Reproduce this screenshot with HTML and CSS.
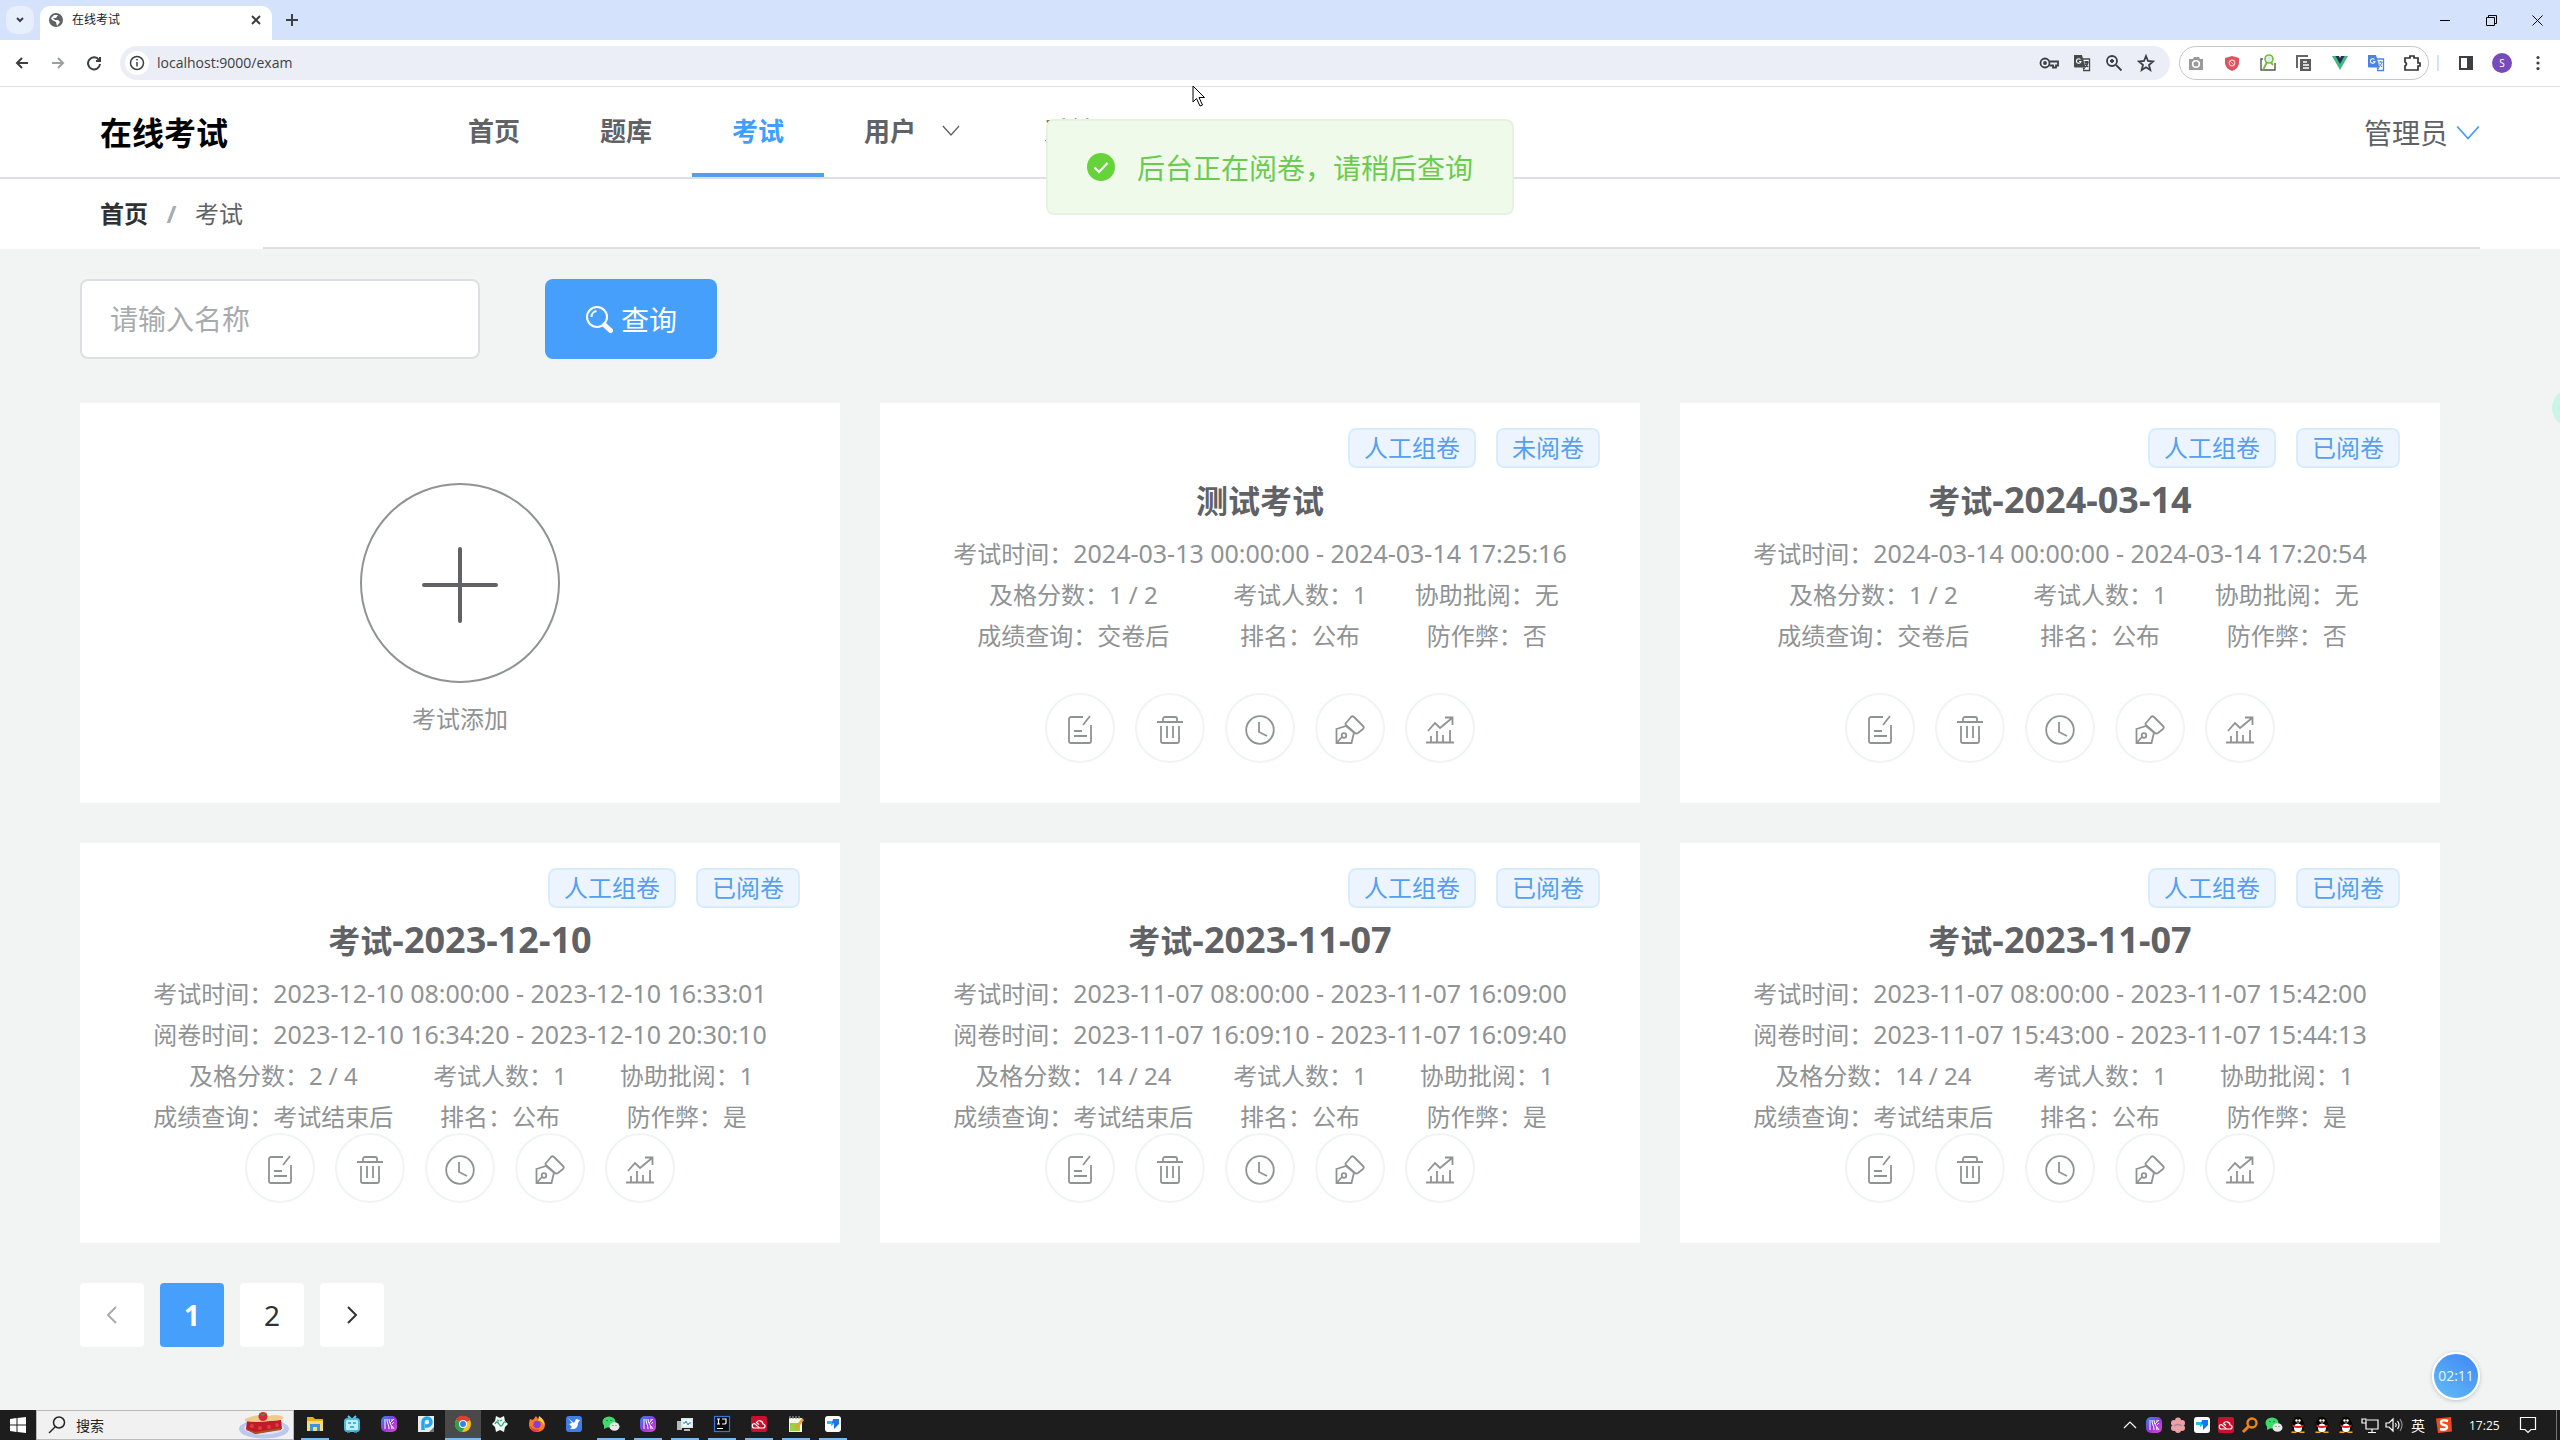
FILE: index.html
```html
<!DOCTYPE html>
<html lang="zh-CN">
<head>
<meta charset="utf-8">
<title>在线考试</title>
<link rel="stylesheet" href="styles.css">
</head>
<body>
<svg class="sprite" aria-hidden="true">
  <symbol id="edit" viewBox="0 0 30 30"><path d="M18 2H6a2 2 0 0 0-2 2v22a2 2 0 0 0 2 2h18a2 2 0 0 0 2-2V10M25 1l-7 9M9 16h8M9 21h13"/></symbol>
  <symbol id="trash" viewBox="0 0 30 30"><path d="M2 7h26M8 7V4a2 2 0 0 1 2-2h10a2 2 0 0 1 2 2v3M6 11v15a2 2 0 0 0 2 2h14a2 2 0 0 0 2-2V11M12 11v12M18 11v12"/></symbol>
  <symbol id="clock" viewBox="0 0 30 30"><circle cx="15" cy="15" r="13.8"/><path d="M14 7v10l8 4"/></symbol>
  <symbol id="pen" viewBox="0 0 30 30"><path d="M1.500 14l9.500-3 8 6.500-2.500 10.500h-15zM1.500 28l6-6.500M11 8l5-6q1.500-1.500 3 0l9 9q1.500 1.500 0 3l-5 4q-1.500 1-3 0l-8.500-7.500q-1.500-1-.500-2.500z"/><circle cx="9" cy="20.500" r="2.300"/></symbol>
  <symbol id="chart" viewBox="0 0 30 30"><path d="M1 27.500h28M6 27v-6M12 27V16M18 27v-7M25 27V15M3 16l7-8 5 5L27 3M20 2.500h7.500V10"/></symbol>
  <symbol id="down" viewBox="0 0 20 14"><path d="M1 2l9 10 9-10"/></symbol>
  <symbol id="wechat" viewBox="0 0 18 18"><ellipse cx="7" cy="7" rx="6.500" ry="5.500" fill="#3ddc6a"/><path d="M2 10l0 4 4-2z" fill="#3ddc6a"/><ellipse cx="12.500" cy="11.500" rx="5" ry="4.300" fill="#e8e8e8"/><g fill="#257a3d"><circle cx="5" cy="5.500" r=".8"/><circle cx="9" cy="5.500" r=".8"/><circle cx="11" cy="10.500" r=".6"/><circle cx="14" cy="10.500" r=".6"/></g></symbol>
  <linearGradient id="violet" x1="0" x2="1" y2="1"><stop stop-color="#2b8cf5"/><stop offset=".5" stop-color="#9436dc"/><stop offset="1" stop-color="#e24bd0"/></linearGradient>
  <symbol id="wave" viewBox="0 0 18 18"><rect x="1" y="1" width="16" height="16" rx="5" fill="url(#violet)"/><path d="M5 4v10M7 4c0 5 2 5 2 10M9 4c0 5 3 5 3 10M10 8l4-4M12 9l2-2M11 5l2 0M12 11l2 3" fill="none" stroke="#fff" stroke-width="1"/></symbol>
  <symbol id="cloud" viewBox="0 0 18 18"><rect x="1" y="1" width="16" height="16" rx="2" fill="#c9102d"/><path d="M4.500 13a2.200 2.200 0 0 1 0-4.500l5 4.500H13a2 2 0 0 0 0-4 3.500 3.500 0 0 0-6.500-1.500L9 9.500M4.500 13H10" fill="none" stroke="#fff" stroke-width="1.200"/></symbol>
  <symbol id="todesk" viewBox="0 0 18 18"><rect x="1" y="1" width="16" height="16" rx="3" fill="#fff"/><path d="M3 6h7v3L7 11V9H3z" fill="#16c5e8"/><path d="M9 4h6v5l-5 5V8H8z" fill="#1d73f5"/></symbol>
  <symbol id="qq" viewBox="0 0 18 18"><ellipse cx="9" cy="9.500" rx="6.500" ry="7" fill="#050505"/><circle cx="9" cy="5.500" r="4.800" fill="#050505"/><ellipse cx="9" cy="12" rx="4" ry="4.200" fill="#fff"/><circle cx="7.500" cy="4.500" r="1.200" fill="#fff"/><circle cx="10.500" cy="4.500" r="1.200" fill="#fff"/><path d="M3.500 8.500q5.500 3 11 0v2q-5.500 3-11 0z" fill="#e01f2d"/><path d="M2.500 15.500h5V17h-5zM10.500 15.500h5V17h-5zM7 6.500h4L9 7.700z" fill="#f5a81c"/></symbol>
  <symbol id="translate" viewBox="0 0 18 18"><path d="M7 5h9.500v11.500H10" fill="#fff" stroke="currentColor" stroke-width="1.300"/><path d="M1 1h8l3.500 12.500H2a1 1 0 0 1-1-1z" fill="currentColor"/><path d="M9.500 13.500h3l-2 3z" fill="currentColor"/><path d="M11.500 8h4M13.500 7v1M15 8q-1 3.500-3 5M12 9.500l3 3.500" fill="none" stroke="currentColor"/><path d="M7.500 5.500A2.300 2.300 0 1 0 8 7.500H6" fill="none" stroke="#fff" stroke-width="1.100"/></symbol>
</svg>

<header class="browser">
  <div class="tabstrip">
    <button class="tabsearch" aria-label="搜索标签页"><svg width="8" height="6" viewBox="0 0 8 6"><path d="M1 1l3 3 3-3"/></svg></button>
    <div class="tab">
      <svg width="16" height="16" viewBox="0 0 16 16"><circle cx="8" cy="8" r="7" fill="#5f6368"/><path d="M3 6l3-3h4L8 6H5l2 2h3l2 2-3 4-1-4-4-2z" fill="#fff"/></svg>
      <span class="tabname">在线考试</span>
      <button aria-label="关闭标签页"><svg width="10" height="10" viewBox="0 0 10 10"><path d="M1 1l8 8M9 1L1 9"/></svg></button>
    </div>
    <button class="newtab" aria-label="新标签页"><svg width="12" height="12" viewBox="0 0 12 12"><path d="M6 0v12M0 6h12"/></svg></button>
    <div class="winbtns">
      <button aria-label="最小化"><svg width="11" height="11" viewBox="0 0 11 11"><path d="M0 5.500h10"/></svg></button>
      <button aria-label="还原"><svg width="11" height="11" viewBox="0 0 11 11"><path d="M.5 2.500h8v8h-8zM2.500 2V.5h8v8H9"/></svg></button>
      <button aria-label="关闭"><svg width="11" height="11" viewBox="0 0 11 11"><path d="M.5.5l10 10M10.500.5l-10 10"/></svg></button>
    </div>
  </div>
  <div class="toolbar">
    <div class="navbtns">
      <button aria-label="后退"><svg width="16" height="16" viewBox="0 0 16 16"><path d="M14 8H3M8 3L3 8l5 5"/></svg></button>
      <button aria-label="前进" disabled><svg width="16" height="16" viewBox="0 0 16 16"><path d="M2 8h11M8 3l5 5-5 5"/></svg></button>
      <button aria-label="刷新"><svg width="16" height="16" viewBox="0 0 16 16"><path d="M13 5a6 6 0 1 0 1 4M14 2v4h-4"/></svg></button>
    </div>
    <div class="omnibox">
      <span class="siteinfo"><svg width="16" height="16" viewBox="0 0 16 16"><circle cx="8" cy="8" r="6.500"/><path d="M8 7v4.500M8 4v1.500"/></svg></span>
      <input aria-label="地址" value="localhost:9000/exam">
      <div class="omniicons">
        <svg width="20" height="18" viewBox="0 0 20 18"><circle cx="6" cy="9" r="4.500"/><circle cx="6" cy="9" r="1"/><path d="M10.500 7.500H19v4h-2v2h-3v-2h-3.500"/></svg>
        <svg class="dark" width="18" height="18"><use href="#translate"/></svg>
        <svg width="18" height="18" viewBox="0 0 18 18"><circle cx="7" cy="7" r="5"/><path d="M11 11l5.500 5.500M7 5v4M5 7h4"/></svg>
        <svg width="18" height="18" viewBox="0 0 18 18"><path d="M9 2l2 5 5 .5-4 3.500 1.300 5L9 13.300 4.700 16 6 11 2 7.500 7 7z"/></svg>
      </div>
    </div>
    <div class="extensions">
      <svg width="18" height="18" viewBox="0 0 18 18"><path d="M2 5h4l1-2h5l1 2h3v11H2z" fill="#9a9a9a"/><circle cx="9" cy="10" r="3.300" fill="#9a9a9a" stroke="#fff" stroke-width="1.600"/></svg>
      <svg width="18" height="18" viewBox="0 0 18 18"><path d="M9 2l7 2v5q0 5-7 8-7-3-7-8V4z" fill="#db5460"/><circle cx="9" cy="9" r="2.800" fill="none" stroke="#f4c6ca" stroke-width="1.200"/><path d="M7 7l4 4" stroke="#f4c6ca"/></svg>
      <svg width="18" height="18" viewBox="0 0 18 18"><path d="M4 5H2v11h14V9" fill="none" stroke="#555" stroke-width="1.400"/><circle cx="10" cy="5" r="4" fill="#d9efe5" stroke="#76bb35" stroke-width="1.600"/><path d="M8 8l-4 8M12 8q1 2 2 3" fill="none" stroke="#76bb35" stroke-width="1.800"/></svg>
      <svg width="18" height="18" viewBox="0 0 18 18"><path d="M2 14V2h11" fill="none" stroke="#666" stroke-width="2"/><path d="M5 5h11v12H5z" fill="#5c5c5c"/><path d="M8 8h4M8 11h6M8 14h6" stroke="#fff" stroke-width="1.300"/></svg>
      <svg width="18" height="18" viewBox="0 0 18 18"><path d="M1 2h4l4 7 4-7h4L9 16z" fill="#41b883"/><path d="M4.500 2H8l1 2 1-2h3.500L9 10z" fill="#22344b"/></svg>
      <svg class="blue" width="18" height="18"><use href="#translate"/></svg>
      <svg width="18" height="18" viewBox="0 0 18 18"><path d="M2 4h5V2h4v2h4v5h2v3h-2v4H2v-4q3-2 0-4z" fill="none" stroke="#333" stroke-width="1.700"/></svg>
    </div>
    <span class="toolsep"></span>
    <div class="toolend">
      <svg width="16" height="16" viewBox="0 0 16 16"><path d="M1 1h14v14H1z" fill="#3c4043"/><path d="M3 3h6v10H3z" fill="#fff"/></svg>
      <span class="avatar">S</span>
      <svg width="16" height="16" viewBox="0 0 16 16" fill="#3c4043"><circle cx="8" cy="2.500" r="1.600"/><circle cx="8" cy="8" r="1.600"/><circle cx="8" cy="13.500" r="1.600"/></svg>
    </div>
  </div>
</header>

<header class="apphead">
  <h1 class="logo">在线考试</h1>
  <nav class="menu">
    <a href="#home">首页</a>
    <a href="#bank">题库</a>
    <a href="#exam" class="active">考试</a>
    <a href="#user">用户<svg class="arrow" width="18" height="13"><use href="#down"/></svg></a>
    <a href="#system">系统<svg class="arrow" width="18" height="13"><use href="#down"/></svg></a>
  </nav>
  <button class="account">管理员<svg class="arrow" width="24" height="17"><use href="#down"/></svg></button>
</header>
<div class="crumbbar">
  <nav class="crumbs"><a href="#home">首页</a><span class="slash">/</span><span>考试</span></nav>
  <div class="crumbline"></div>
</div>

<main class="page">
  <form class="search">
    <input aria-label="名称" placeholder="请输入名称">
    <button type="button"><svg width="28" height="28" viewBox="0 0 28 28"><circle cx="12" cy="12" r="10"/><path d="M6.500 12a6 6 0 0 1 5-6"/><path class="handle" d="M19.500 20l6 5.500"/></svg>查询</button>
  </form>

  <section class="cards">
    <article class="card add">
      <button aria-label="考试添加"><svg width="80" height="80" viewBox="0 0 80 80"><path d="M40 4v72M4 40h72"/></svg></button>
      <span>考试添加</span>
    </article>

    <article class="card">
      <div class="tags"><span>人工组卷</span><span>未阅卷</span></div>
      <h2>测试考试</h2>
      <div class="info">
        <p>考试时间：<time>2024-03-13 00:00:00 - 2024-03-14 17:25:16</time></p>
        <div class="trio"><span>及格分数：1 / 2</span><span>考试人数：1</span><span>协助批阅：无</span></div>
        <div class="trio"><span>成绩查询：交卷后</span><span>排名：公布</span><span>防作弊：否</span></div>
      </div>
      <div class="actions">
        <button aria-label="编辑"><svg><use href="#edit"/></svg></button>
        <button aria-label="删除"><svg><use href="#trash"/></svg></button>
        <button aria-label="时间"><svg><use href="#clock"/></svg></button>
        <button aria-label="阅卷"><svg><use href="#pen"/></svg></button>
        <button aria-label="统计"><svg><use href="#chart"/></svg></button>
      </div>
    </article>

    <article class="card">
      <div class="tags"><span>人工组卷</span><span>已阅卷</span></div>
      <h2>考试<time>-2024-03-14</time></h2>
      <div class="info">
        <p>考试时间：<time>2024-03-14 00:00:00 - 2024-03-14 17:20:54</time></p>
        <div class="trio"><span>及格分数：1 / 2</span><span>考试人数：1</span><span>协助批阅：无</span></div>
        <div class="trio"><span>成绩查询：交卷后</span><span>排名：公布</span><span>防作弊：否</span></div>
      </div>
      <div class="actions">
        <button aria-label="编辑"><svg><use href="#edit"/></svg></button>
        <button aria-label="删除"><svg><use href="#trash"/></svg></button>
        <button aria-label="时间"><svg><use href="#clock"/></svg></button>
        <button aria-label="阅卷"><svg><use href="#pen"/></svg></button>
        <button aria-label="统计"><svg><use href="#chart"/></svg></button>
      </div>
    </article>

    <article class="card">
      <div class="tags"><span>人工组卷</span><span>已阅卷</span></div>
      <h2>考试<time>-2023-12-10</time></h2>
      <div class="info">
        <p>考试时间：<time>2023-12-10 08:00:00 - 2023-12-10 16:33:01</time></p>
        <p>阅卷时间：<time>2023-12-10 16:34:20 - 2023-12-10 20:30:10</time></p>
        <div class="trio"><span>及格分数：2 / 4</span><span>考试人数：1</span><span>协助批阅：1</span></div>
        <div class="trio"><span>成绩查询：考试结束后</span><span>排名：公布</span><span>防作弊：是</span></div>
      </div>
      <div class="actions">
        <button aria-label="编辑"><svg><use href="#edit"/></svg></button>
        <button aria-label="删除"><svg><use href="#trash"/></svg></button>
        <button aria-label="时间"><svg><use href="#clock"/></svg></button>
        <button aria-label="阅卷"><svg><use href="#pen"/></svg></button>
        <button aria-label="统计"><svg><use href="#chart"/></svg></button>
      </div>
    </article>

    <article class="card">
      <div class="tags"><span>人工组卷</span><span>已阅卷</span></div>
      <h2>考试<time>-2023-11-07</time></h2>
      <div class="info">
        <p>考试时间：<time>2023-11-07 08:00:00 - 2023-11-07 16:09:00</time></p>
        <p>阅卷时间：<time>2023-11-07 16:09:10 - 2023-11-07 16:09:40</time></p>
        <div class="trio"><span>及格分数：14 / 24</span><span>考试人数：1</span><span>协助批阅：1</span></div>
        <div class="trio"><span>成绩查询：考试结束后</span><span>排名：公布</span><span>防作弊：是</span></div>
      </div>
      <div class="actions">
        <button aria-label="编辑"><svg><use href="#edit"/></svg></button>
        <button aria-label="删除"><svg><use href="#trash"/></svg></button>
        <button aria-label="时间"><svg><use href="#clock"/></svg></button>
        <button aria-label="阅卷"><svg><use href="#pen"/></svg></button>
        <button aria-label="统计"><svg><use href="#chart"/></svg></button>
      </div>
    </article>

    <article class="card">
      <div class="tags"><span>人工组卷</span><span>已阅卷</span></div>
      <h2>考试<time>-2023-11-07</time></h2>
      <div class="info">
        <p>考试时间：<time>2023-11-07 08:00:00 - 2023-11-07 15:42:00</time></p>
        <p>阅卷时间：<time>2023-11-07 15:43:00 - 2023-11-07 15:44:13</time></p>
        <div class="trio"><span>及格分数：14 / 24</span><span>考试人数：1</span><span>协助批阅：1</span></div>
        <div class="trio"><span>成绩查询：考试结束后</span><span>排名：公布</span><span>防作弊：是</span></div>
      </div>
      <div class="actions">
        <button aria-label="编辑"><svg><use href="#edit"/></svg></button>
        <button aria-label="删除"><svg><use href="#trash"/></svg></button>
        <button aria-label="时间"><svg><use href="#clock"/></svg></button>
        <button aria-label="阅卷"><svg><use href="#pen"/></svg></button>
        <button aria-label="统计"><svg><use href="#chart"/></svg></button>
      </div>
    </article>
  </section>

  <nav class="pager">
    <button aria-label="上一页" disabled><svg width="12" height="20" viewBox="0 0 12 20"><path d="M10 2l-8 8 8 8"/></svg></button>
    <button class="current">1</button>
    <button>2</button>
    <button aria-label="下一页"><svg width="12" height="20" viewBox="0 0 12 20"><path d="M2 2l8 8-8 8"/></svg></button>
  </nav>
</main>

<footer class="taskbar">
  <button class="start" aria-label="开始"><svg width="16" height="16" viewBox="0 0 16 16" fill="#fff"><path d="M0 2l6.500-1v6.500H0zM7.500 1L16 0v7.500H7.500zM0 8.500h6.500V15L0 14zM7.500 8.500H16V16l-8.500-1z"/></svg></button>
  <div class="tasksearch">
    <svg class="lens" width="18" height="18" viewBox="0 0 18 18"><circle cx="11" cy="6.500" r="5.500"/><path d="M7 11l-6 6"/></svg>
    <input aria-label="搜索" placeholder="搜索">
    <svg width="52" height="27" viewBox="0 0 52 27"><ellipse cx="26" cy="17" rx="25" ry="9.500" fill="#bcc8ee"/><ellipse cx="26" cy="16" rx="20" ry="6.500" fill="#dce3fb"/><path d="M9 9l34-1 1 9-27 5-9-5z" fill="#c01c28"/><path d="M8 17l9 3 26-4v2l-25 4-10-4z" fill="#a8541f"/><path d="M7 7Q20 1 30 4q12-3 16 2-3 3-14 3-13 2-25 0z" fill="#f0c98d"/><circle cx="25" cy="4.500" r="4.500" fill="#d3293a"/><path d="M21 1l4 1 4-2-4 4z" fill="#4c9a3b"/><g fill="#df3942"><circle cx="14" cy="14" r="2"/><circle cx="22" cy="16" r="2"/><circle cx="31" cy="15" r="2"/><circle cx="39" cy="13" r="2"/></g></svg>
  </div>
  <div class="apps">
    <button class="open" aria-label="文件资源管理器"><svg viewBox="0 0 18 18"><path d="M1 2h6l2 2h8v12H1z" fill="#e8b020"/><path d="M1 6h16v10H1z" fill="#fbdc72"/><path d="M4 16V9h10v7h-3v-4H7v4z" fill="#3c96d6"/></svg></button>
    <button aria-label="哔哩哔哩"><svg viewBox="0 0 18 18"><path d="M5 1l3 3M13 1l-3 3" stroke="#62c8e8" stroke-width="2"/><rect x="2" y="4" width="14" height="12" rx="2.500" fill="#bdf0fa" stroke="#4dbbe0" stroke-width="2"/><path d="M5 8h3M10 8h3M7 12h4M4 17h3M11 17h3" stroke="#2a9ec5" stroke-width="1.500"/></svg></button>
    <button aria-label="录屏"><svg><use href="#wave"/></svg></button>
    <button aria-label="播放器"><svg viewBox="0 0 18 18"><path d="M1 1h16v16H1z" fill="#e8edf2"/><path d="M12 17h5v-5z" fill="#777"/><path d="M6 15V7a4 4 0 1 1 4 4H8" fill="none" stroke="#28a5e8" stroke-width="3.500"/></svg></button>
    <button class="open front" aria-label="Chrome"><svg viewBox="0 0 18 18"><circle cx="9" cy="9" r="8" fill="#fbc116"/><path d="M9 9L2 5a8 8 0 0 1 14 0z" fill="#e33b2e"/><path d="M9 9L2 5a8 8 0 0 0 6 12l4-7z" fill="#2ba24c"/><circle cx="9" cy="9" r="4" fill="#fff"/><circle cx="9" cy="9" r="3" fill="#3b7ded"/></svg></button>
    <button aria-label="设置工具"><svg viewBox="0 0 18 18"><path d="M5 1l4 2 4-2 1 5 3 3-3 3-1 5-4-2-4 2-1-5-3-3 3-3z" fill="#eefaf6"/><path d="M4 9q2-4 4 0t4 0 3-1M6 5l2 1M11 5l-2 1" fill="none" stroke="#35a084" stroke-width="1.300"/></svg></button>
    <button aria-label="Firefox"><svg viewBox="0 0 18 18"><path d="M2 4l3 1 3-4 2 3 3-1q4 3 4 7a8 7 0 0 1-16 0Q1 7 2 4z" fill="#ff7a22"/><path d="M11 1q6 4 5 9-3-5-6-4z" fill="#ffd43a"/><circle cx="9" cy="9.500" r="3.700" fill="#8b3bd6"/><path d="M2 10q3 6 10 4-2 3-5 3-4-1-5-7z" fill="#f0304c"/></svg></button>
    <button aria-label="飞鸟"><svg viewBox="0 0 18 18"><rect x="1" y="1" width="16" height="16" rx="3" fill="#3d7ee8"/><path d="M3 3l6 5 2-4 4 1-2 3q0 5-4 6l-4 0 2-2-3-3 3-1z" fill="#fff"/></svg></button>
    <button class="open" aria-label="微信"><svg><use href="#wechat"/></svg></button>
    <button class="open" aria-label="录屏窗口"><svg><use href="#wave"/></svg></button>
    <button class="open" aria-label="监视器"><svg viewBox="0 0 18 18"><path d="M1 6h5v9H1z" fill="#b7bcbb"/><path d="M5 3h12v10H5z" fill="#dfe4e4"/><path d="M6.500 4.500h9v7h-9z" fill="#eefcff"/><path d="M7 8h2l1-2 2 4 1-2h2" fill="none" stroke="#1f8bb0"/><path d="M8 14h6v2H8z" fill="#b7bcbb"/></svg></button>
    <button class="open" aria-label="IntelliJ IDEA"><svg viewBox="0 0 18 18"><rect x="1.500" y="1.500" width="15" height="15" fill="#090909" stroke="#2c78d8" stroke-width="1.200"/><path d="M4 4h3M5.500 4v5M4 9h3M9 4h4v4q0 1-1.500 1H9M4 13.500h6" fill="none" stroke="#fff" stroke-width="1.200"/></svg></button>
    <button class="open" aria-label="云服务"><svg><use href="#cloud"/></svg></button>
    <button class="open" aria-label="记事本"><svg viewBox="0 0 18 18"><path d="M2 3h13v14H2z" fill="#f5f8ec"/><path d="M3 8h10v8H3z" fill="#9ad043"/><path d="M3 1v3M6 1v3M9 1v3M12 1v3" stroke="#999" stroke-width="1.200"/><path d="M15 3l2 2-7 9-2 1v-3z" fill="#e7a72c"/></svg></button>
    <button class="open" aria-label="ToDesk"><svg><use href="#todesk"/></svg></button>
  </div>
  <div class="tray">
    <svg class="line" viewBox="0 0 18 18"><path d="M3 12l6-6 6 6"/></svg>
    <svg><use href="#wave"/></svg>
    <svg viewBox="0 0 18 18"><g fill="#eea0a6"><circle cx="9" cy="4.500" r="3"/><circle cx="13" cy="7" r="3"/><circle cx="13" cy="12" r="3"/><circle cx="9" cy="14" r="3"/><circle cx="5" cy="12" r="3"/><circle cx="5" cy="7" r="3"/><circle cx="9" cy="9" r="4"/></g><path d="M5 10q4-3 8 0" fill="none" stroke="#9b8d91" stroke-width="1.500"/></svg>
    <svg><use href="#todesk"/></svg>
    <svg><use href="#cloud"/></svg>
    <svg viewBox="0 0 18 18"><circle cx="11" cy="7" r="4.500" fill="none" stroke="#f08316" stroke-width="2.400"/><path d="M7.500 10.500L2 16" stroke="#f08316" stroke-width="3"/></svg>
    <svg><use href="#wechat"/></svg>
    <svg><use href="#qq"/></svg>
    <svg><use href="#qq"/></svg>
    <svg><use href="#qq"/></svg>
    <svg class="line" viewBox="0 0 18 18"><path d="M6 4h11v9H5V7M1 3h4v4H1zM11 13v3M7 16.500h8"/></svg>
    <svg class="line" viewBox="0 0 18 18"><path d="M1 7h3l4-4v12l-4-4H1zM10.500 7q1.500 2 0 4M12.500 5q3 4 0 8"/><path d="M15 3q4 6 0 12" opacity=".5"/></svg>
    <span class="ime">英</span>
    <svg class="sogou" viewBox="0 0 18 18"><path d="M1 2.500L16 1l1 14.500L3 17z" fill="#ee4a22"/><path d="M13 5Q6 3 6 6.500 6 8.500 9 9t3 2.500Q11 14.500 5 13" fill="none" stroke="#fff" stroke-width="2.400"/></svg>
    <time>17:25</time>
    <svg class="line" viewBox="0 0 18 18"><path d="M1.500 1.500h15v12H12l-3 3-3-3H1.500z"/></svg>
    <span class="deskedge"></span>
  </div>
</footer>

<div class="toast" role="alert">
  <svg width="28" height="28" viewBox="0 0 28 28"><circle cx="14" cy="14" r="14" fill="#67d33a"/><path d="M7.500 14.500l4.500 4.500 8.500-9" fill="none" stroke="#fff" stroke-width="2.200"/></svg>
  后台正在阅卷，请稍后查询
</div>
<div class="timer">02:11</div>
<div class="bubble"></div>
<svg class="cursor" width="14" height="23" viewBox="0 0 14 23"><path d="M1 1v16l3.500-3.500 3.500 7.500 2.500-1-3.500-7.500h5.500z" fill="#fff" stroke="#000"/></svg>
</body>
</html>
```
FILE: styles.css
```css
* { box-sizing: border-box; }
body {
  margin: 0;
  min-height: 100vh;
  position: relative;
  overflow-x: hidden;
  display: flex;
  flex-direction: column;
  background: #f1f4f3;
  color: #606266;
  font-family: "Noto Sans", "Noto Sans CJK SC", sans-serif;
  font-size: 24px;
}
button { border: 0; padding: 0; background: none; font: inherit; color: inherit; display: flex; align-items: center; justify-content: center; }
input { border: 0; padding: 0; background: none; font: inherit; color: inherit; outline: 0; min-width: 0; }
a { color: inherit; text-decoration: none; }
h1, h2, p { margin: 0; }
svg { display: block; flex: none; }
.sprite { position: absolute; width: 0; height: 0; }

/* browser frame */
.browser { background: #fff; border-bottom: 1px solid #dfe1e5; color: #202124; }
.browser button svg, .omnibox svg { fill: none; stroke: #3c4043; stroke-width: 2; }
.tabstrip { height: 40px; background: #d5e2fb; display: flex; padding: 6px 0 0 6px; }
.tabsearch { width: 28px; height: 28px; border-radius: 10px; background: #e7effd; }
.tab { width: 232px; margin-left: 6px; padding: 0 11px 6px 8px; background: #fff; border-radius: 10px 10px 0 0; display: flex; align-items: center; gap: 8px; }
.tabname { flex: 1; font-size: 12px; line-height: 20px; }
.tabstrip .newtab { width: 28px; height: 28px; margin-left: 6px; }
.winbtns { margin-left: auto; display: flex; height: 28px; }
.winbtns button { width: 46px; }
.tabstrip .winbtns svg { stroke: #000; stroke-width: 1; }
.toolbar { height: 46px; padding: 0 14px; display: flex; align-items: center; }
.navbtns { display: flex; gap: 20px; padding-right: 18px; }
.navbtns button:disabled { opacity: .5; }
.omnibox { flex: 1; height: 34px; border-radius: 17px; background: #ebeef6; display: flex; align-items: center; padding: 0 15px 0 5px; }
.siteinfo { width: 24px; height: 24px; border-radius: 12px; background: #fff; display: grid; place-items: center; }
.omnibox .siteinfo svg { stroke-width: 1.5; }
.omnibox input { flex: 1; margin-left: 8px; font: 14px/24px "Open Sans", sans-serif; color: #3c4043; }
.omniicons { display: flex; gap: 14px; }
.omnibox .omniicons svg { stroke-width: 1.8; }
.omnibox .omniicons .dark { color: #474a4d; stroke: none; }
.extensions .blue { color: #4a83e8; }
.extensions { height: 34px; margin-left: 9px; padding: 0 7px; border: 1px solid #c4c7cc; border-radius: 17px; display: flex; align-items: center; gap: 18px; }
.toolsep { width: 2px; height: 16px; margin: 0 19px 0 8px; background: #d5e2fb; }
.toolend { display: flex; align-items: center; gap: 18px; }
.avatar { width: 20px; height: 20px; border-radius: 10px; background: #774bb9; color: #fff; font-size: 10px; line-height: 20px; text-align: center; }

/* application header */
.apphead { height: 92px; background: #fff; border-bottom: 2px solid #dcdfe6; padding: 0 80px 0 100px; display: flex; align-items: stretch; }
.logo { width: 328px; font-size: 32px; line-height: 92px; color: #000; }
.arrow { fill: none; stroke: currentColor; stroke-width: 1.5; }
.menu { display: flex; font-size: 26px; font-weight: 700; }
.menu a { padding: 0 40px; height: 90px; border-bottom: 4px solid transparent; display: flex; align-items: center; }
.menu .arrow { margin: 0 4px 0 26px; }
.menu .active { color: #409eff; border-bottom-color: #529eea; }
.account { margin-left: auto; font-size: 28px; gap: 8px; }
.account .arrow { color: #409eff; }
.crumbbar { height: 70px; background: #fff; padding: 0 80px 0 100px; display: flex; }
.crumbs { display: flex; align-items: center; line-height: 70px; padding-right: 20px; }
.crumbs a { font-weight: 700; color: #303133; }
.slash { width: 47px; text-align: center; color: #a8abb2; font-weight: 700; }
.crumbline { flex: 1; border-bottom: 2px solid #dedfe0; }

/* content */
.page { flex: 1; padding: 30px 120px 60px 80px; }
.search { display: flex; gap: 65px; }
.search input { width: 400px; height: 80px; padding: 0 28px; border: 2px solid #dcdfe2; border-radius: 8px; background: #fff; font-size: 28px; }
.search input::placeholder { color: #a8abad; }
.search button { width: 172px; border-radius: 8px; background: #469ffb; color: #fff; font-size: 28px; gap: 8px; }
.search svg { fill: none; stroke: #fff; stroke-width: 2; }
.search .handle { stroke-width: 5; stroke-linecap: round; }
.cards { margin-top: 44px; display: grid; grid-template-columns: repeat(3, 1fr); gap: 40px; }
.card { height: 400px; padding: 25px 40px 40px; background: #fff; display: flex; flex-direction: column; color: #8f9394; }
.tags { display: flex; justify-content: flex-end; gap: 20px; }
.tags span { height: 40px; line-height: 36px; padding: 0 14px; border: 2px solid #d9ecfc; border-radius: 8px; background: #ecf5ff; color: #559ef0; }
.card h2 { font-size: 32px; line-height: 66px; height: 65px; text-align: center; color: #606266; }
.card h2 time { font-size: 36px; line-height: 1; }
.info { flex: 1; min-height: 0; padding: 0 20px; line-height: 41px; text-align: center; white-space: nowrap; }
.info time { font-size: 25px; line-height: 1; }
.trio { display: grid; grid-template-columns: 10fr 7fr 7fr; }
.trio span { display: flex; justify-content: center; min-width: 0; }
.actions { display: flex; justify-content: center; gap: 20px; }
.actions button { width: 70px; height: 70px; padding-top: 4px; border: 2px solid #f1f4f4; border-radius: 50%; }
.actions svg { width: 30px; height: 30px; fill: none; stroke: #8f9394; stroke-width: 1.8; }
.add { align-items: center; padding-top: 80px; }
.add button { width: 200px; height: 200px; padding-top: 4px; border: 2px solid #8f9394; border-radius: 50%; }
.add button svg { stroke: #606266; stroke-width: 4; stroke-linecap: round; }
.add span { margin-top: 16px; line-height: 40px; }
.pager { display: flex; gap: 16px; margin-top: 40px; }
.pager button { width: 64px; height: 64px; border-radius: 4px; background: #fff; font-size: 28px; color: #303133; }
.pager .current { background: #469ffb; color: #fff; font-weight: 700; }
.pager svg { fill: none; stroke: #303133; stroke-width: 2; }
.pager :disabled svg { stroke: #a8abb2; }

/* desktop taskbar */
.taskbar { height: 30px; background: #1d1d1d; color: #fff; display: flex; }
.start { width: 36px; }
.tasksearch { width: 258px; background: #f1f1f1; border: 1px solid #b9b9b9; display: flex; align-items: center; padding: 0 3px 0 11px; gap: 10px; }
.tasksearch input { flex: 1; height: 26px; font-size: 14px; line-height: 20px; color: #222; }
.tasksearch input::placeholder { color: #222; }
.lens { fill: none; stroke: #222; stroke-width: 1.5; }
.apps { display: flex; gap: 1px; padding-left: 3px; }
.apps button { width: 36px; border-bottom: 2px solid transparent; }
.apps svg, .tray svg { width: 18px; height: 18px; }
.apps .open { background: linear-gradient(#7db8e8, #7db8e8) center bottom / 28px 2px no-repeat border-box; }
.apps .front { background: #4a4a4a; border-bottom-color: #7db8e8; }
.tray { margin-left: auto; display: flex; align-items: center; gap: 6px; padding-right: 3px; }
.tray .line { fill: none; stroke: #fff; stroke-width: 1.2; }
.ime { width: 18px; font-size: 14px; text-align: center; }
.tray .sogou { margin: 0 10px 0 2px; }
.tray time { width: 34px; margin-right: 10px; font: 12px "Open Sans", sans-serif; }
.deskedge { width: 1px; height: 30px; margin-left: 13px; background: #777; }

/* overlays */
.toast { position: absolute; top: 119px; left: 50%; transform: translateX(-50%); height: 96px; padding: 0 39px; border: 2px solid #e4f3db; border-radius: 8px; background: #f0faea; color: #6bcb50; font-size: 28px; display: flex; align-items: center; gap: 22px; white-space: nowrap; }
.timer { position: absolute; right: 80px; bottom: 40px; width: 48px; height: 48px; border: 2px solid #fff; border-radius: 50%; background: linear-gradient(215deg, #3f86f5, #62bdf6); box-shadow: 0 1px 4px #b9c4cc; color: #e6f6ff; font: 14px/44px "Open Sans", sans-serif; text-align: center; }
.bubble { position: absolute; right: -30px; top: 389px; width: 38px; height: 38px; border-radius: 50%; background: #c9f5e6; }
.cursor { position: absolute; left: 1192px; top: 85px; }
```
